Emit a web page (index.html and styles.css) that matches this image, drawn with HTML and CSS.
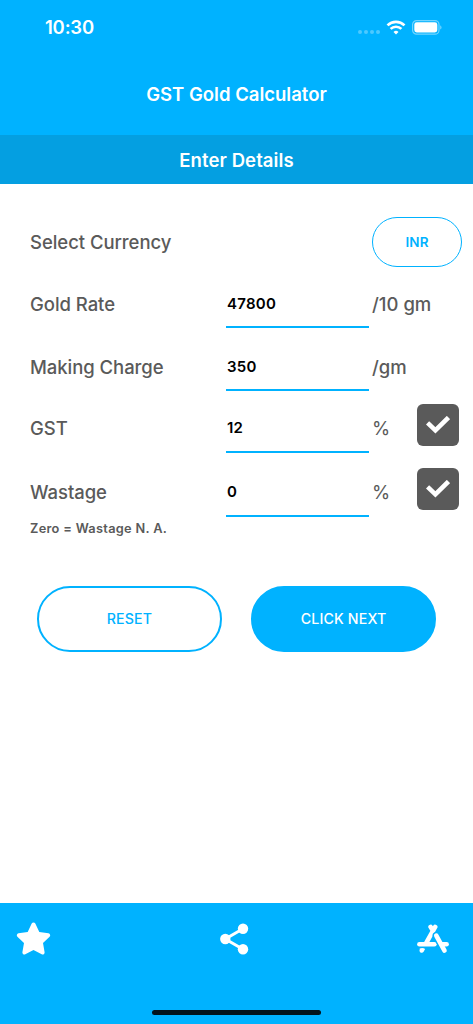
FILE: index.html
```html
<!DOCTYPE html>
<html lang="en">
<head>
  <meta charset="UTF-8" />
  <meta name="viewport" content="width=device-width, initial-scale=1.0"/>
  <title>GST Gold Calculator</title>
  <link rel="stylesheet" href="styles.css">
</head>
<body>
  <!-- Header -->
  <header class="header">
    <div class="status-bar">
      <span class="time">10:30</span>
      <div class="status-icons">
        <svg class="signal" width="22" height="6" viewBox="0 0 22 6">
          <circle cx="2" cy="3" r="2"/>
          <circle cx="8" cy="3" r="2"/>
          <circle cx="14" cy="3" r="2"/>
          <circle cx="20" cy="3" r="2"/>
        </svg>
        <svg class="wifi" width="20" height="15" viewBox="0 0 20 15">
          <path d="M1.5 5.4a12.2 12.2 0 0 1 17 0" />
          <path d="M4.6 8.9a7.8 7.8 0 0 1 10.8 0" />
          <path class="wifi-dot" d="M10 14.6l-2.5-2.6a3.7 3.7 0 0 1 5 0z" />
        </svg>
        <svg class="battery" width="30" height="15" viewBox="0 0 30 15">
          <rect class="battery-case" x=".6" y=".6" width="26.4" height="13.6" rx="4"/>
          <rect x="2.3" y="2.3" width="23" height="10.2" rx="2.4"/>
          <path class="battery-tip" d="M28.2 5.2c1.8.7 1.8 3.7 0 4.4z"/>
        </svg>
      </div>
    </div>
    <h1 class="title">GST Gold Calculator</h1>
  </header>

  <h2 class="section-title">Enter Details</h2>

  <!-- Details form -->
  <main class="form">
    <div class="row-currency">
      <span class="label">Select Currency</span>
      <button class="currency-btn">INR</button>
    </div>
    <div class="row row-rate">
      <label class="label" for="rate">Gold Rate</label>
      <input class="field" id="rate" type="text" value="47800">
      <span class="unit">/10 gm</span>
    </div>
    <div class="row row-making">
      <label class="label" for="making">Making Charge</label>
      <input class="field" id="making" type="text" value="350">
      <span class="unit">/gm</span>
    </div>
    <div class="row row-gst">
      <label class="label" for="gst">GST</label>
      <input class="field" id="gst" type="text" value="12">
      <span class="unit percent">%</span>
      <button class="check" aria-label="Apply GST">
        <svg width="24" height="18" viewBox="0 0 24 18"><path d="M3.2 8.4l6.2 5.9L20.8 3.1"/></svg>
      </button>
    </div>
    <div class="row row-wastage">
      <label class="label" for="wastage">Wastage</label>
      <input class="field" id="wastage" type="text" value="0">
      <span class="unit percent">%</span>
      <button class="check" aria-label="Apply wastage">
        <svg width="24" height="18" viewBox="0 0 24 18"><path d="M3.2 8.4l6.2 5.9L20.8 3.1"/></svg>
      </button>
    </div>
    <p class="note">Zero = Wastage N. A.</p>

    <div class="actions">
      <button class="btn btn-outline">RESET</button>
      <button class="btn btn-solid">CLICK NEXT</button>
    </div>
  </main>

  <!-- Bottom bar -->
  <footer class="footer">
    <nav class="tabs">
      <svg width="35" height="34" viewBox="0 0 35 34">
        <path d="M15.7 1.6a2 2 0 0 1 3.6 0l4 8.3 9.2 1.4a2 2 0 0 1 1.1 3.4l-6.6 6.4 1.6 9.1a2 2 0 0 1-2.9 2.1l-8.2-4.3-8.2 4.3a2 2 0 0 1-2.9-2.1L8 21.1l-6.6-6.4a2 2 0 0 1 1.1-3.4l9.2-1.4z"/>
      </svg>
      <svg class="share" width="29" height="32" viewBox="0 0 29 32">
        <path class="share-line" d="M23 5.8L5.3 16 23 26.2"/>
        <circle cx="5.3" cy="16" r="5.2"/>
        <circle cx="23" cy="5.8" r="5.2"/>
        <circle cx="23" cy="26.2" r="5.2"/>
      </svg>
      <svg class="store" width="32" height="30" viewBox="0 0 32 30">
        <path d="M13.6 2.9L16 6.8M18.2 2.9L9.4 18.6"/>
        <path d="M2.4 20.3H17.4"/>
        <path class="store-gap" d="M19.3 11.6L27.5 26.6"/>
        <path d="M19.3 11.6L27.5 26.6"/>
        <path d="M25.4 20.3H29.6"/>
        <path class="store-foot" d="M2.7 24.6c2 -.9 4 -.7 5.4.5l-1.5 2.7c-1.5 2.3 -5 .3 -3.9 -2z"/>
      </svg>
    </nav>
    <div class="home-indicator"></div>
  </footer>
</body>
</html>
```

FILE: styles.css
```css
/* ---------- Global Reset & Typography ---------- */
* {
  box-sizing: border-box;
  margin: 0;
  padding: 0;
}
html, body {
  height: 100%;
}
body {
  display: flex;
  flex-direction: column;
  font-family: Inter, "Liberation Sans", sans-serif;
  background-color: #ffffff;
  color: #5a5a5a;
  overflow: hidden;
}
button, input {
  font-family: inherit;
}
button {
  cursor: pointer;
}

/* ---------- Header ---------- */
.header {
  background-color: #00b2ff;
  color: #ffffff;
  height: 135px;
}
.status-bar {
  display: flex;
  align-items: center;
  justify-content: space-between;
  height: 54px;
  padding: 0 31px 0 45px;
}
.time {
  font-size: 18.5px;
  font-weight: 600;
  letter-spacing: -0.2px;
}
.status-icons {
  display: flex;
  align-items: center;
  fill: #ffffff;
}
.signal {
  margin: 9px 6px 0 0;
  opacity: 0.3;
}
.wifi {
  fill: none;
  margin-right: 6px;
  stroke: #ffffff;
  stroke-width: 2.7;
}
.wifi-dot {
  fill: #ffffff;
  stroke: none;
}
.battery-case {
  fill: none;
  stroke: #ffffff;
  stroke-opacity: 0.45;
  stroke-width: 1.2;
}
.battery-tip {
  opacity: 0.45;
}
.title {
  font-size: 18.5px;
  font-weight: 600;
  line-height: 24px;
  padding-top: 28px;
  text-align: center;
}
.section-title {
  background-color: #049fe1;
  color: #ffffff;
  font-size: 18.5px;
  font-weight: 600;
  height: 49px;
  letter-spacing: 0.1px;
  line-height: 50px;
  text-align: center;
}

/* ---------- Form ---------- */
.form {
  flex: 1;
  padding: 33px 11px 0 30px;
}
.row {
  display: grid;
  grid-template-columns: 193px 143px 42px 42px;
  column-gap: 3px;
  align-items: center;
  height: 48px;
}
.row-currency {
  display: flex;
  align-items: center;
  justify-content: space-between;
  height: 50px;
}
.row-rate {
  margin-top: 13px;
}
.row-making {
  margin-top: 15px;
}
.row-gst {
  margin-top: 14px;
}
.row-wastage {
  margin-top: 16px;
}
.label, .unit {
  font-size: 18.5px;
  font-weight: 500;
  letter-spacing: -0.05px;
  white-space: nowrap;
}
.unit {
  letter-spacing: 0;
}
.row-gst .label, .row-gst .unit,
.row-wastage .label, .row-wastage .unit {
  padding-bottom: 2px;
}
.percent {
  font-weight: 400;
}
.field {
  background: none;
  border: none;
  border-bottom: 2px solid #00b2ff;
  color: #000000;
  font-size: 15px;
  font-weight: 600;
  height: 48px;
  letter-spacing: 0.25px;
  outline: none;
  padding-left: 1px;
  width: 143px;
}
.row-gst .field, .row-wastage .field {
  padding-bottom: 2px;
}
.currency-btn {
  background: none;
  border: 1px solid #00b2ff;
  border-radius: 25px;
  color: #00b2ff;
  font-size: 13.5px;
  font-weight: 600;
  height: 50px;
  letter-spacing: 0.1px;
  width: 90px;
}
.check {
  align-self: start;
  background-color: #5a5a5a;
  border: none;
  border-radius: 6px;
  display: flex;
  justify-content: center;
  height: 42px;
  margin-top: -1px;
  padding-top: 12px;
  width: 42px;
}
.check svg {
  fill: none;
  flex: none;
  stroke: #ffffff;
  stroke-linecap: square;
  stroke-width: 4.6;
}
.note {
  font-size: 12.8px;
  font-weight: 600;
  letter-spacing: 0.3px;
  line-height: 20px;
  margin-top: 2px;
}

/* ---------- Buttons ---------- */
.actions {
  display: flex;
  gap: 29px;
  margin: 47px 0 0 7px;
}
.btn {
  border: 2px solid #00b2ff;
  border-radius: 33px;
  font-size: 14.2px;
  font-weight: 500;
  height: 66px;
  letter-spacing: 0.15px;
  padding-bottom: 1px;
  width: 185px;
}
.btn-outline {
  background: none;
  color: #00b2ff;
}
.btn-solid {
  background-color: #00b2ff;
  color: #ffffff;
}

/* ---------- Footer ---------- */
.footer {
  background-color: #00b2ff;
  display: flex;
  flex-direction: column;
  align-items: center;
  justify-content: space-between;
  height: 121px;
  padding: 19px 0 9px;
}
.tabs {
  display: flex;
  align-items: center;
  justify-content: space-between;
  fill: #ffffff;
  padding: 0 24px 0 16px;
  width: 100%;
}
.share-line {
  fill: none;
  stroke: #ffffff;
  stroke-width: 3;
}
.store {
  fill: none;
  stroke: #ffffff;
  stroke-linecap: round;
  stroke-width: 4.6;
}
.store-gap {
  stroke: #00b2ff;
  stroke-width: 7.4;
}
.store-foot {
  fill: #ffffff;
  stroke: none;
}
.home-indicator {
  background-color: #03141c;
  border-radius: 3px;
  height: 5px;
  width: 169px;
}
```
